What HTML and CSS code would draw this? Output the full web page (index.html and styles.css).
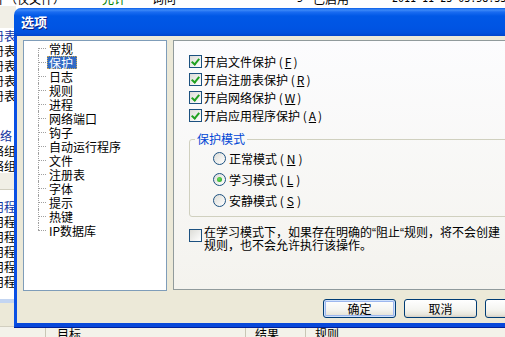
FILE: index.html
```html
<!DOCTYPE html>
<html lang="zh-CN">
<head>
    <meta charset="UTF-8">
    <title>选项</title>
    <link rel="stylesheet" href="styles.css">
</head>
<body>

<div class="desk">
    <div class="bg-top">
        <div class="bg-top-row">
            <span class="cell c1">件（仅文件）</span>
            <span class="cell c2 allow">允许</span>
            <span class="cell c3">询问</span>
            <span class="cell c4">5</span>
            <span class="cell c5">已启用</span>
            <span class="cell c6 mono">2011-11-23 03:58:33</span>
        </div>
    </div>

    <div class="strip">
        <div class="band gray h22"></div>
        <div class="srow head"><span>注册表</span></div>
        <div class="srow"><span>注册表</span></div>
        <div class="srow"><span>注册表</span></div>
        <div class="srow"><span>注册表</span></div>
        <div class="srow"><span>注册表</span></div>
        <div class="band h25"></div>
        <div class="srow head short"><span>网络</span></div>
        <div class="srow"><span>网络组</span></div>
        <div class="srow"><span>网络组</span></div>
        <div class="band gray line h17"></div>
        <div class="band h9"></div>
        <div class="srow head"><span>应用程</span></div>
        <div class="srow"><span>应用程</span></div>
        <div class="srow"><span>应用程</span></div>
        <div class="srow"><span>应用程</span></div>
        <div class="srow"><span>应用程</span></div>
        <div class="srow"><span>应用程</span></div>
        <div class="band h10"></div>
        <div class="band blue h4"></div>
        <div class="band beige line h24"></div>
    </div>

    <div class="bg-head">
        <div class="hc w45"></div>
        <div class="hc w200">目标</div>
        <div class="hc w60">结果</div>
        <div class="hc">规则</div>
    </div>
</div>

<!-- 选项对话框，盖在主窗口上面 -->
<div class="dialog">
    <div class="titlebar">选项</div>
    <div class="frame">
        <div class="main">
            <ul class="tree">
                <li><span class="lbl">常规</span></li>
                <li><span class="lbl sel">保护</span></li>
                <li><span class="lbl">日志</span></li>
                <li><span class="lbl">规则</span></li>
                <li><span class="lbl">进程</span></li>
                <li><span class="lbl">网络端口</span></li>
                <li><span class="lbl">钩子</span></li>
                <li><span class="lbl">自动运行程序</span></li>
                <li><span class="lbl">文件</span></li>
                <li><span class="lbl">注册表</span></li>
                <li><span class="lbl">字体</span></li>
                <li><span class="lbl">提示</span></li>
                <li><span class="lbl">热键</span></li>
                <li><span class="lbl">IP数据库</span></li>
            </ul>

            <div class="panel">
                <label class="chk-row"><span class="chk on"></span>开启文件保护 (<u>F</u>)</label>
                <label class="chk-row"><span class="chk on"></span>开启注册表保护 (<u>R</u>)</label>
                <label class="chk-row"><span class="chk on"></span>开启网络保护 (<u>W</u>)</label>
                <label class="chk-row"><span class="chk on"></span>开启应用程序保护 (<u>A</u>)</label>

                <fieldset class="group">
                    <legend>保护模式</legend>
                    <label class="radio-row"><span class="radio"></span>正常模式 (<u>N</u>)</label>
                    <label class="radio-row"><span class="radio on"></span>学习模式 (<u>L</u>)</label>
                    <label class="radio-row"><span class="radio"></span>安静模式 (<u>S</u>)</label>
                </fieldset>

                <label class="note">
                    <span class="chk"></span>
                    <span class="note-text">在学习模式下，如果存在明确的<span class="q">“</span>阻止<span class="q">“</span>规则，将不会创建<br>规则，也不会允许执行该操作。</span>
                </label>
            </div>
        </div>

        <div class="buttons">
            <div class="btn default">确定</div>
            <div class="btn">取消</div>
            <div class="btn">应用</div>
        </div>
    </div>
</div>

</body>
</html>
```

FILE: styles.css
```css
body {
    margin: 0;
    padding: 0;
    width: 505px;
    height: 337px;
    overflow: hidden;
    position: relative;
    font-family: "Noto Sans CJK SC", sans-serif;
    font-size: 12px;
    color: #000;
    background: #fff;
}

/* 背后的主窗口 */
.desk {
    display: flex;
    flex-direction: column;
    height: 337px;
}
.bg-top {
    height: 6px;
    overflow: hidden;
    background: #fff;
}
.bg-top-row {
    display: flex;
    margin-top: -8px;
    margin-left: -7px;
    height: 14px;
    line-height: 14px;
    white-space: nowrap;
}
.cell { flex: none; }
.c1 { width: 109px; }
.c2 { width: 50px; }
.c3 { width: 145px; }
.c4 { width: 16px; font-family: "DejaVu Sans Mono", monospace; font-size: 10px; }
.c5 { width: 79px; }
.allow { color: #008000; }
.mono {
    font-family: "DejaVu Sans Mono", monospace;
    font-size: 10px;
}

.strip {
    width: 16px;
    display: flex;
    flex-direction: column;
}
.band { background: #fff; }
.band.gray { background: #F1EFE6; }
.band.blue { background: #C3D5F2; }
.band.beige { background: #ECE9D8; }
.band.line { border-bottom: 1px solid #D2CFC0; box-sizing: border-box; }
.h4 { height: 4px; }
.h9 { height: 9px; }
.h10 { height: 10px; }
.h17 { height: 17px; }
.h22 { height: 22px; }
.h24 { height: 24px; }
.h25 { height: 25px; }
.srow {
    height: 15px;
    line-height: 15px;
    display: flex;
    justify-content: flex-end;
    overflow: hidden;
    white-space: nowrap;
    background: #fff;
}
.srow span { flex: none; }
.srow.head { color: #1033A0; }
.srow.short { padding-right: 4px; }

.bg-head {
    height: 10px;
    display: flex;
    background: #F3F2EA;
    overflow: hidden;
}
.hc {
    flex: none;
    line-height: 14px;
    border-right: 1px solid #C9C6B5;
    white-space: nowrap;
}
.w45 { width: 45px; }
.w200 { width: 188px; padding-left: 11px; }
.w60 { width: 50px; padding-left: 9px; }
.hc:last-child { border-right: 0; padding-left: 9px; }

/* 对话框 */
.dialog {
    position: absolute;
    left: 14px;
    top: 8px;
    width: 560px;
}
.titlebar {
    height: 28px;
    line-height: 28px;
    padding-left: 7px;
    border-radius: 7px 7px 0 0;
    background: linear-gradient(to bottom,
        #0A5DE8 0px, #3D8AF7 2px, #1A6CF1 4px, #0058E6 8px,
        #0054E3 20px, #0050DD 25px, #0044CC 28px);
    color: #fff;
    font-size: 13px;
    font-weight: bold;
    text-shadow: 1px 1px 0 #0A1E80;
}
.frame {
    background: #ECE9D8;
    border-left: 3px solid #0A50E4;
    border-bottom: 4px solid #0848DA;
    box-shadow: 0 1px 0 #00209A;
    padding: 4px 0 5px 6px;
}
.main {
    display: flex;
    gap: 6px;
}

.tree {
    width: 144px;
    height: 251px;
    box-sizing: border-box;
    border: 1px solid #7F9DB9;
    background: #fff;
    margin: 0;
    padding: 0;
    list-style: none;
    flex: none;
}
.tree li {
    position: relative;
    height: 14px;
    line-height: 14px;
    padding-left: 23px;
    white-space: nowrap;
}
.tree li::before {
    content: '';
    position: absolute;
    left: 14px;
    top: 7px;
    width: 8px;
    border-top: 1px dotted #A0A0A0;
}
.tree li::after {
    content: '';
    position: absolute;
    left: 14px;
    top: 0;
    bottom: 0;
    border-left: 1px dotted #A0A0A0;
}
.tree li:first-child::after { top: 7px; }
.tree li:last-child::after { bottom: 7px; }
.lbl {
    display: inline-block;
    vertical-align: top;
    margin-top: 1px;
    height: 11px;
    line-height: 11px;
    padding: 0 3px 0 1px;
    border: 1px solid transparent;
}
.lbl.sel {
    background: #316AC5;
    color: #fff;
    border: 1px dotted #C9A550;
}

.panel {
    flex: 1;
    height: 250px;
    box-sizing: border-box;
    border: 1px solid #919B9C;
    background: linear-gradient(#FCFCFE, #F4F3EE);
    padding: 11px 0 0 15px;
    overflow: hidden;
}
.chk-row {
    display: flex;
    align-items: center;
    gap: 2px;
    height: 18px;
    white-space: nowrap;
}
.chk {
    flex: none;
    width: 13px;
    height: 13px;
    box-sizing: border-box;
    border: 1px solid #1C5180;
    background: linear-gradient(135deg, #DCDCD7, #FFFFFF);
    position: relative;
}
.chk.on::after {
    content: '';
    position: absolute;
    left: 3px;
    top: 1px;
    width: 3px;
    height: 6px;
    border: solid #21A121;
    border-width: 0 2px 2px 0;
    transform: rotate(40deg);
}

.group {
    margin: 9px 0 0 0;
    border: 1px solid #D0D0BF;
    border-radius: 3px;
    padding: 3px 0 5px 0;
    min-width: 0;
}
.group legend {
    margin-left: 5px;
    padding: 0 2px;
    color: #0046D5;
    line-height: 12px;
}
.radio-row {
    display: flex;
    align-items: center;
    gap: 3px;
    height: 21px;
    padding-left: 23px;
    white-space: nowrap;
}
.radio {
    flex: none;
    width: 13px;
    height: 13px;
    box-sizing: border-box;
    border: 1px solid #1C5180;
    border-radius: 50%;
    background: linear-gradient(135deg, #DCDCD7, #FFFFFF);
    position: relative;
}
.radio.on::after {
    content: '';
    position: absolute;
    left: 3px;
    top: 3px;
    width: 5px;
    height: 5px;
    border-radius: 50%;
    background: radial-gradient(circle at 40% 40%, #6BE05A, #1C9A1C);
}

.note {
    display: flex;
    align-items: flex-start;
    gap: 2px;
    margin-top: 9px;
    white-space: nowrap;
}
.note .chk { margin-top: 3px; }
.note-text { line-height: 12px; }
.q { font-family: "Liberation Sans", sans-serif; }

.buttons {
    display: flex;
    gap: 8px;
    margin-top: 8px;
    padding-left: 300px;
}
.btn {
    flex: none;
    width: 73px;
    height: 19px;
    box-sizing: border-box;
    border: 1px solid #003C74;
    border-radius: 3px;
    background: linear-gradient(#FFFFFF, #F5F5F1 55%, #E8E6DC 85%, #D6D0C5);
    text-align: center;
    line-height: 17px;
}
.btn.default {
    box-shadow: inset 0 0 0 1px #CEE1FC, inset 0 0 0 2px #9DB7EE;
}
```
